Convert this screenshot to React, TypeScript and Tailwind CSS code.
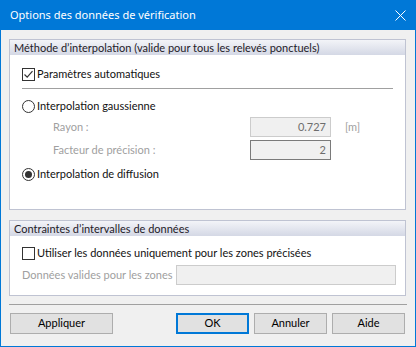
import type { ReactNode } from 'react';

function CheckBox({ checked }: { checked?: boolean }) {
  return (
    <div className="w-[13px] h-[13px] border border-[#333333] bg-white flex items-center justify-center shrink-0">
      {checked && (
        <svg width="11" height="11" viewBox="0 0 11 11">
          <path d="M1.5 5.5 L4.2 8.2 L9.5 2.2" fill="none" stroke="#333333" strokeWidth="1.2" />
        </svg>
      )}
    </div>
  );
}

function Radio({ checked }: { checked?: boolean }) {
  return (
    <div className="w-[13px] h-[13px] rounded-full border border-[#333333] bg-white flex items-center justify-center shrink-0">
      {checked && <div className="w-[7px] h-[7px] rounded-full bg-[#333333]" />}
    </div>
  );
}

function GroupBox({ title, height, children }: { title: string; height: string; children: ReactNode }) {
  return (
    <div className={`${height} w-[397px] border border-[#bfc3d2] bg-white flex flex-col`}>
      <div className="h-[15px] leading-[15px] pl-[4px] text-[11px] text-[#1e2028] bg-gradient-to-b from-[#f3f4f8] to-[#d4d8e5]">
        {title}
      </div>
      {children}
    </div>
  );
}

function Button({ label, width, primary }: { label: string; width: string; primary?: boolean }) {
  return (
    <div
      className={`${width} h-[21px] flex items-center justify-center bg-[#e1e1e1] text-[11px] text-black ${
        primary ? 'border-2 border-[#0078d7]' : 'border border-[#adadad]'
      }`}
    >
      {label}
    </div>
  );
}

export default function App() {
  return (
    <div className="w-[416px] h-[347px] flex flex-col bg-[#0078d7] font-['Lato',sans-serif] text-[11px]">
      {/* title bar */}
      <div className="h-[30px] flex items-center justify-between pl-[10px] pr-[10px] shrink-0">
        <span className="font-['Noto_Sans',sans-serif] text-[11px] text-white pt-[1px]">
          Options des données de vérification
        </span>
        <svg width="11" height="11" viewBox="0 0 11 11" className="mb-[0px]">
          <path d="M0.5 0.5 L10.5 10.5 M10.5 0.5 L0.5 10.5" stroke="white" strokeWidth="1" />
        </svg>
      </div>

      {/* body */}
      <div className="flex-1 mx-[1px] mb-[1px] bg-[#f0f0f0] flex flex-col pt-[9px] pl-[8px]">
        <GroupBox title="Méthode d’interpolation (valide pour tous les relevés ponctuels)" height="h-[171px]">
          <div className="flex flex-col pl-[12px] pt-[13px]">
            <div className="flex items-center h-[13px]">
              <CheckBox checked />
              <span className="ml-[2px] text-[#111]">Paramètres automatiques</span>
            </div>
            <div className="mt-[7px] w-[371px] h-px bg-[#a0a0a0]" />
            <div className="mt-[11px] flex items-center h-[13px]">
              <Radio />
              <span className="ml-[2px] text-[#111]">Interpolation gaussienne</span>
            </div>
            <div className="mt-[4px] flex items-center h-[20px]">
              <span className="ml-[31px] w-[197px] text-[#a0a0a0]">Rayon :</span>
              <div className="w-[81px] h-[20px] border border-[#cccccc] bg-[#f0f0f0] text-[#6d6d6d] flex items-center justify-end pr-[4px]">
                0.727
              </div>
              <span className="ml-[14px] text-[#a0a0a0]">[m]</span>
            </div>
            <div className="mt-[3px] flex items-center h-[20px]">
              <span className="ml-[31px] w-[197px] text-[#a0a0a0]">Facteur de précision :</span>
              <div className="w-[81px] h-[20px] border border-[#7a7a7a] bg-[#f0f0f0] text-[#6d6d6d] flex items-center justify-end pr-[4px]">
                2
              </div>
            </div>
            <div className="mt-[8px] flex items-center h-[13px]">
              <Radio checked />
              <span className="ml-[2px] text-[#111]">Interpolation de diffusion</span>
            </div>
          </div>
        </GroupBox>

        <div className="mt-[10px]">
          <GroupBox title="Contraintes d’intervalles de données" height="h-[76px]">
            <div className="flex flex-col pl-[12px] pt-[11px]">
              <div className="flex items-center h-[13px]">
                <CheckBox />
                <span className="ml-[2px] text-[#111]">Utiliser les données uniquement pour les zones précisées</span>
              </div>
              <div className="mt-[5px] flex items-center h-[20px]">
                <span className="w-[154px] text-[#a0a0a0]">Données valides pour les zones</span>
                <div className="w-[220px] h-[20px] border border-[#cccccc] bg-[#f0f0f0]" />
              </div>
            </div>
          </GroupBox>
        </div>

        <div className="mt-[8px] w-[398px] h-px bg-[#a0a0a0]" />

        <div className="mt-[8px] flex items-center pl-[1px]">
          <Button label="Appliquer" width="w-[103px]" />
          <div className="ml-[63px] flex gap-[5px]">
            <Button label="OK" width="w-[73px]" primary />
            <Button label="Annuler" width="w-[73px]" />
            <Button label="Aide" width="w-[73px]" />
          </div>
        </div>
      </div>
    </div>
  );
}
